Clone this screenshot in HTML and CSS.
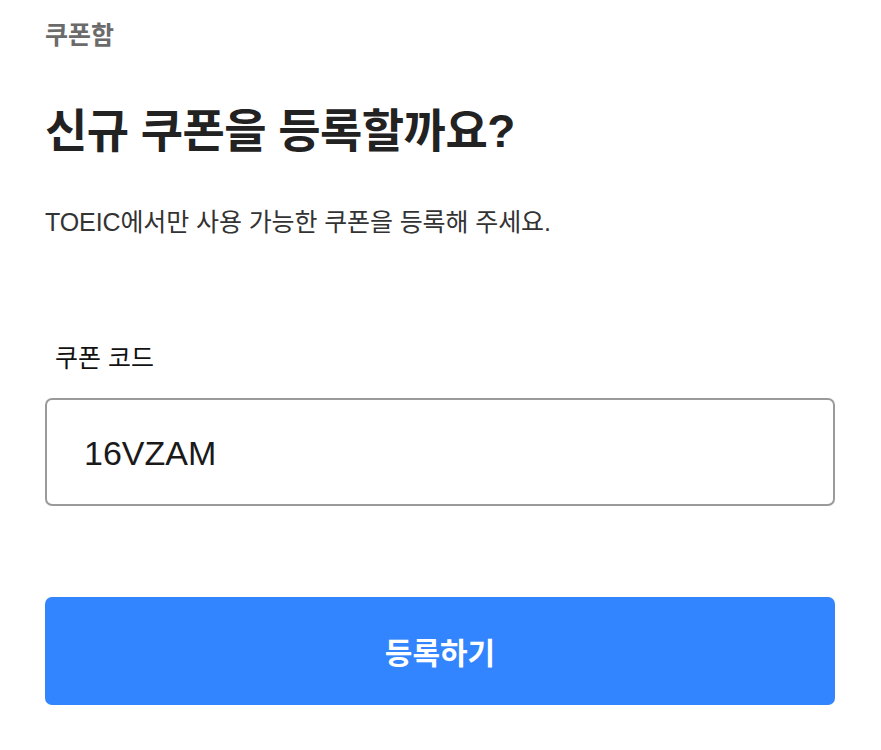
FILE: index.html
```html
<!DOCTYPE html>
<html lang="ko">
<head>
<meta charset="utf-8">
<link rel="stylesheet" href="styles.css">
</head>
<body>
<main class="page">
  <div class="crumb">쿠폰함</div>
  <h1 class="title">신규 쿠폰을 등록할까요?</h1>
  <p class="desc">TOEIC에서만 사용 가능한 쿠폰을 등록해 주세요.</p>
  <label class="label" for="code">쿠폰 코드</label>
  <input id="code" class="field" type="text" value="16VZAM">
  <button class="submit" type="button">등록하기</button>
</main>
</body>
</html>
```
FILE: styles.css
```css
html, body {
  margin: 0;
  padding: 0;
  background: #fff;
}
body {
  font-family: "Liberation Sans", "Noto Sans CJK KR", sans-serif;
}
.page {
  display: flex;
  flex-direction: column;
  padding: 20px 46px 0 45px;
}
.crumb {
  font-size: 25px;
  font-weight: 700;
  color: #6b6b6b;
  line-height: 30px;
}
.title {
  margin: 56px 0 0;
  font-size: 46px;
  font-weight: 700;
  color: #222;
  line-height: 50px;
  letter-spacing: -0.55px;
}
.desc {
  margin: 51px 0 0;
  font-size: 25px;
  color: #333;
  line-height: 30px;
  letter-spacing: -0.1px;
}
.label {
  margin: 106px 0 0 10px;
  font-size: 25px;
  color: #111;
  line-height: 30px;
}
.field {
  margin-top: 25px;
  box-sizing: border-box;
  height: 108px;
  width: 100%;
  border: 2px solid #9a9a9a;
  border-radius: 7px;
  padding: 2px 0 0 37px;
  font-family: "Liberation Sans", sans-serif;
  font-size: 34px;
  color: #1a1a1a;
  background: #fff;
  outline: none;
}
.submit {
  margin-top: 91px;
  height: 108px;
  width: 100%;
  border: none;
  border-radius: 7px;
  background: #3385ff;
  color: #fff;
  font-family: "Liberation Sans", "Noto Sans CJK KR", sans-serif;
  font-size: 30px;
  font-weight: 700;
  cursor: pointer;
}
```
